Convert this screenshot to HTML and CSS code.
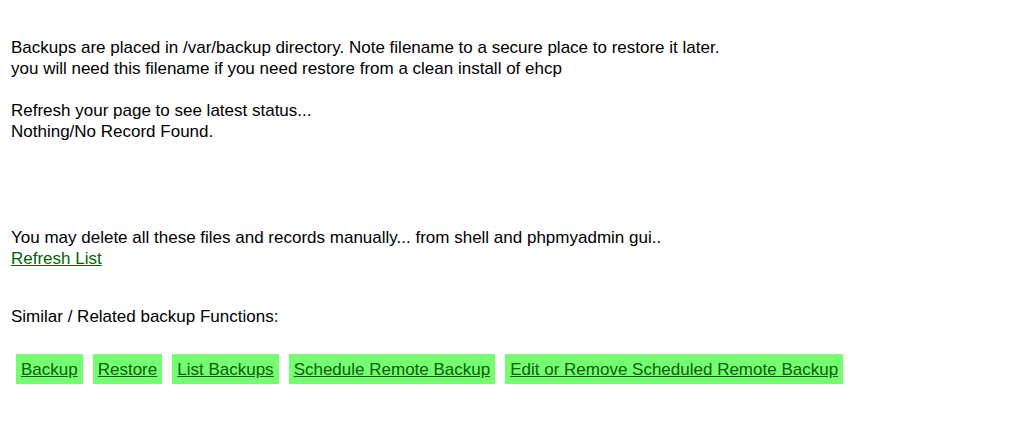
FILE: index.html
```html
<!DOCTYPE html>
<html>
<head>
<meta charset="utf-8">
<link rel="stylesheet" href="styles.css">
</head>
<body>
<div class="page">
  <div class="info">
    Backups are placed in /var/backup directory. Note filename to a secure place to restore it later.<br>
    you will need this filename if you need restore from a clean install of ehcp<br>
    <br>
    Refresh your page to see latest status...<br>
    Nothing/No Record Found.
  </div>
  <div class="manual">
    You may delete all these files and records manually... from shell and phpmyadmin gui..<br>
    <a href="#" class="link">Refresh List</a>
  </div>
  <div class="related">Similar / Related backup Functions:</div>
  <div class="buttons">
    <a href="#" class="btn">Backup</a>
    <a href="#" class="btn">Restore</a>
    <a href="#" class="btn">List Backups</a>
    <a href="#" class="btn">Schedule Remote Backup</a>
    <a href="#" class="btn">Edit or Remove Scheduled Remote Backup</a>
  </div>
</div>
</body>
</html>
```

FILE: styles.css
```css
html, body {
  margin: 0;
  padding: 0;
  background: #ffffff;
}
body {
  font-family: "Liberation Sans", Arial, sans-serif;
  font-size: 17px;
  line-height: 21px;
  color: #000000;
}
.page {
  padding: 37px 11px 0 11px;
}
.manual {
  margin-top: 85px;
}
.related {
  margin-top: 37px;
}
.link {
  color: #006400;
  text-decoration: underline;
}
.buttons {
  display: flex;
  gap: 10px;
  margin-top: 27px;
  padding-left: 5px;
}
.btn {
  display: inline-block;
  background: #75ff70;
  color: #0b5e0b;
  text-decoration: underline;
  padding: 5px 5px 4px 5px;
  line-height: 21px;
}
```
